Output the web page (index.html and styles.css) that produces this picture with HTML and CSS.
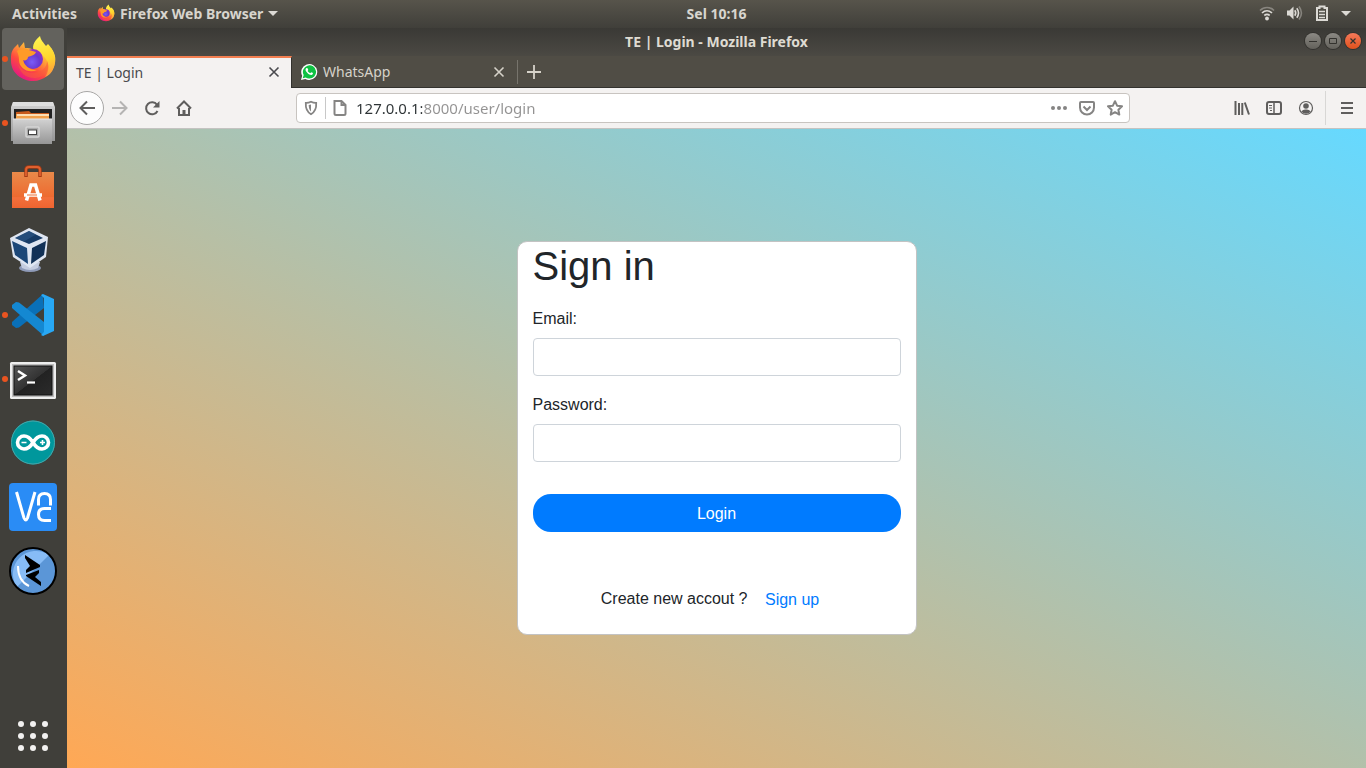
FILE: index.html
```html
<!DOCTYPE html>
<html lang="id">
<head>
<meta charset="utf-8">
<meta name="viewport" content="width=device-width, initial-scale=1">
<title>TE | Login</title>
<link rel="stylesheet" href="styles.css">
</head>
<body>
<svg class="defs" width="0" height="0" aria-hidden="true">
  <defs>
    <linearGradient id="foxBody" x1="0.85" y1="0.1" x2="0.2" y2="0.95"><stop offset="0" stop-color="#fff44f"/><stop offset=".35" stop-color="#ffa436"/><stop offset=".65" stop-color="#ff4a3f"/><stop offset="1" stop-color="#e31587"/></linearGradient>
    <linearGradient id="foxFlame" x1="0.4" y1="0" x2="0.6" y2="1"><stop offset="0" stop-color="#fff44f"/><stop offset=".6" stop-color="#ffd32c"/><stop offset="1" stop-color="#ff9640"/></linearGradient>
    <radialGradient id="foxGlobe" cx=".45" cy=".65" r=".65"><stop offset="0" stop-color="#7a5cf5"/><stop offset=".6" stop-color="#6a38cf"/><stop offset="1" stop-color="#9a2fc0"/></radialGradient>
    <linearGradient id="metal" x1="0" y1="0" x2="0" y2="1"><stop offset="0" stop-color="#d2d2d2"/><stop offset="1" stop-color="#969696"/></linearGradient>
    <linearGradient id="bag" x1="0" y1="0" x2="0" y2="1"><stop offset="0" stop-color="#e98a4a"/><stop offset=".7" stop-color="#ee6a30"/><stop offset=".71" stop-color="#f4703c"/><stop offset="1" stop-color="#ef6430"/></linearGradient>
    <linearGradient id="screen" x1="0" y1="0" x2="1" y2="1"><stop offset="0" stop-color="#555"/><stop offset=".5" stop-color="#333"/><stop offset=".51" stop-color="#222"/><stop offset="1" stop-color="#2b2b2b"/></linearGradient>
    <symbol id="firefox" viewBox="0 0 48 48">
      <path fill="url(#foxBody)" d="M5 13 9 9l1 4 5-6 1 6c3 0 6 0 8 2 3-3 9-5 14-1l4-1c4 5 5 10 4 15-2 10-11 18-22 18S2 38 2 26c0-6 0-9 3-13z"/>
      <path fill="url(#foxFlame)" d="M31 1c1 5 4 7 6 10l2-2c5 5 7 11 7 17 0 7-4 14-10 16 3-4 5-10 2-16-2-5-6-6-11-8-6-5-2-12 4-17z"/>
      <circle cx="24" cy="24" r="10" fill="url(#foxGlobe)"/>
      <path fill="#ff9a28" d="M8 16c5-4 9-3 12-1l7 2c-1 3-5 4-8 5 0 3-3 4-5 3 1 5 6 10 14 10-9 4-18-2-18-10 0-4-1-6-2-9z"/>
      <path fill="#fa5b3d" d="M9 29c4 7 12 11 20 8 6-2 9-6 9-11 4 8-2 17-13 17-8 0-14-5-16-14z" opacity=".55"/>
    </symbol>
    <symbol id="close" viewBox="0 0 12 12"><path d="M1.500 1.500l9 9m0-9l-9 9" fill="none" stroke="currentColor" stroke-width="1.600"/></symbol>
  </defs>
</svg>

<header class="topbar">
  <div class="topbar-left">
    <button class="plain" type="button">Activities</button>
    <button class="plain app-menu" type="button"><svg width="18" height="18" aria-hidden="true"><use href="#firefox"/></svg>Firefox Web Browser<span class="caret"></span></button>
  </div>
  <button class="plain clock" type="button">Sel 10:16</button>
  <button class="plain tray" type="button" aria-label="System menu">
    <svg width="16" height="16" viewBox="0 0 16 16" fill="none" stroke="#dcdad5" stroke-width="1.700"><path d="M1 5.500c4-4 10-4 14 0" opacity=".4"/><path d="M3 8c3-2.800 7-2.800 10 0M5.300 10.500c1.700-1.400 3.700-1.400 5.400 0"/><circle cx="8" cy="13.500" r="1.900" fill="#dcdad5" stroke="none"/></svg>
    <svg width="16" height="16" viewBox="0 0 16 16" fill="none" stroke="#dcdad5" stroke-width="1.600"><path d="M0 5.500h2.500l4-4v13l-4-4H0z" fill="#dcdad5" stroke="none"/><path d="M7.800 5.200c1.200 1.800 1.200 3.800 0 5.600M9.800 3.300c2.200 3 2.200 6.400 0 9.400"/><path d="M12 1.500c3 4 3 9 0 13" opacity=".4"/></svg>
    <svg width="14" height="18" viewBox="0 0 14 18" fill="none" stroke="#dcdad5" stroke-width="2"><path d="M2 4h2.500V2.500h5V4H12v12H2z"/><path d="M4 7.500h6M4 10.500h6M4 13.500h6" stroke-width="1.400"/></svg>
    <span class="caret"></span>
  </button>
</header>

<div class="desktop">
  <nav class="dock" aria-label="Dock">
    <button class="dock-item running active" type="button" aria-label="Firefox"><svg width="48" height="48"><use href="#firefox"/></svg></button>
    <button class="dock-item running" type="button" aria-label="Files"><svg width="48" height="48" viewBox="0 0 48 48"><path d="M4 3h40l2 5v34H2V8z" fill="url(#metal)"/><path d="M4 3h40l1 4H3z" fill="#dedede"/><rect x="5" y="10" width="38" height="12" fill="#222"/><path d="M7 13l13-1 2 2h18v8H7z" fill="#c85a1c"/><path d="M7 15h33v6H7z" fill="#f2a04a"/><path d="M8 16h32" stroke="#fff3d8" stroke-width="1.500"/><rect x="4" y="20" width="39" height="25" fill="url(#metal)"/><path d="M4 20h39" stroke="#e8e8e8"/><rect x="17" y="28" width="13" height="10" rx="1" fill="#aaa" stroke="#d5d5d5" stroke-width="1.500"/><rect x="19.500" y="31" width="8" height="4.500" fill="#fff" stroke="#444"/></svg></button>
    <button class="dock-item" type="button" aria-label="Ubuntu Software"><svg width="48" height="48" viewBox="0 0 48 48"><rect x="3" y="9" width="42" height="36" fill="url(#bag)"/><path d="M17 14V7q0-3 3-3h8q3 0 3 3v7" fill="none" stroke="#a53b14" stroke-width="3.500"/><path d="M17 13V7q0-3 3-3h8q3 0 3 3v6" fill="none" stroke="#e0602e" stroke-width="1.800"/><path d="M17.500 37.500 22 22h4.500L31 37.500" fill="none" stroke="#fff" stroke-width="3.500"/><path d="M15 32h18" stroke="#fff" stroke-width="3.500"/><path d="M18 32h10" stroke="#ed6c32"/></svg></button>
    <button class="dock-item" type="button" aria-label="VirtualBox"><svg width="48" height="48" viewBox="0 0 48 48"><ellipse cx="21" cy="41" rx="11" ry="4" fill="#8f9bb8"/><path d="M11 35h20l-2 6q-8 4-16 0z" fill="#c5cde0"/><path d="M20 1l19 9-2 20-16 11L4 30 1 11z" fill="#dfe6f2"/><path d="M20 4l14 7-14 6-14-6z" fill="#173b66"/><path d="M3 14l15 7 1 16L6 28z" fill="#1c4778"/><path d="M37 14l-14 7-1 16 13-9z" fill="#123157"/><path d="M20 4l7 3.500-12 7L6 11z" fill="#33608f" opacity=".5"/></svg></button>
    <button class="dock-item running" type="button" aria-label="Visual Studio Code"><svg width="48" height="48" viewBox="0 0 48 48"><path d="M34 3 3 31v3l4 3 3-.5L35 17z" fill="#0a70b8"/><path d="M35 45 3 17v-3l4-3 3 .5L35 31z" fill="#1488d2"/><path d="M34 3l11 5v32l-11 5-2-1 3-3V7l-3-3z" fill="#28a8f4"/></svg></button>
    <button class="dock-item running" type="button" aria-label="Terminal"><svg width="48" height="48" viewBox="0 0 48 48"><rect x="1" y="7" width="46" height="37" rx="1.500" fill="#eee"/><rect x="3" y="9" width="42" height="33" fill="#bcbcbc"/><rect x="5" y="11" width="38" height="29" fill="url(#screen)" stroke="#111"/><path d="M9 16l7 4.500L9 25" fill="none" stroke="#fff" stroke-width="2.500"/><path d="M18 27.500h8" stroke="#fff" stroke-width="2.200"/></svg></button>
    <button class="dock-item" type="button" aria-label="Arduino IDE"><svg width="48" height="48" viewBox="0 0 48 48"><circle cx="24" cy="23.500" r="22" fill="#00979c"/><circle cx="24" cy="23.500" r="21.500" fill="none" stroke="#4aa5a8"/><path d="M24 23.500c-3-5-6-6.500-9-6.500a6.500 6.500 0 000 13c3 0 6-1.500 9-6.500s6-6.500 9-6.500a6.500 6.500 0 010 13c-3 0-6-1.500-9-6.500z" fill="none" stroke="#fff" stroke-width="3.600"/><path d="M12.500 23.500h5M31 23.500h5m-2.500-2.500v5" stroke="#fff" stroke-width="1.600"/></svg></button>
    <button class="dock-item" type="button" aria-label="VNC Viewer"><svg width="48" height="48" viewBox="0 0 48 48"><rect width="48" height="48" rx="4" fill="#2a8cf5"/><g fill="none" stroke="#fff" stroke-width="3"><path d="M7.500 9 15 35q1.800 4 3.500 0L26 9"/><path d="M29.500 22.500v-6q0-6 6-6t6 6v6M42 25.500h-6.500q-6 0-6 6t6 6H42"/></g></svg></button>
    <button class="dock-item" type="button" aria-label="Editor"><svg width="48" height="48" viewBox="0 0 48 48"><circle cx="24" cy="24" r="23" fill="#5b96d7"/><path d="M40 8A23 23 0 008 40z" fill="#87bcf6"/><circle cx="24" cy="24" r="23" fill="none" stroke="#000" stroke-width="2"/><path d="M16 8l15 10v2l-14 6v-3l4-4-5-8z" fill="#000"/><path d="M30 23v3l-4 4 6 5v4L17 29v-1z" fill="#000"/><path d="M9 19q0 15 11 20" fill="none" stroke="#fff" stroke-width="2"/></svg></button>
    <button class="dock-item show-apps" type="button" aria-label="Show Applications"><svg width="32" height="32" viewBox="0 0 32 32" fill="#f2f1f0"><circle cx="4" cy="4" r="3"/><circle cx="16" cy="4" r="3"/><circle cx="28" cy="4" r="3"/><circle cx="4" cy="16" r="3"/><circle cx="16" cy="16" r="3"/><circle cx="28" cy="16" r="3"/><circle cx="4" cy="28" r="3"/><circle cx="16" cy="28" r="3"/><circle cx="28" cy="28" r="3"/></svg></button>
  </nav>

  <section class="window">
    <div class="titlebar">
      <span></span>
      <span class="window-title">TE | Login - Mozilla Firefox</span>
      <div class="window-buttons">
        <button type="button" aria-label="Minimize"><svg width="10" height="10"><path d="M1 5.500h8" stroke="#33322e"/></svg></button>
        <button type="button" aria-label="Maximize"><svg width="10" height="10"><path d="M1.500 2.500h7v5h-7z" fill="none" stroke="#33322e"/></svg></button>
        <button class="window-close" type="button" aria-label="Close"><svg width="10" height="10"><path d="M2.500 2.500l5 5m0-5l-5 5" stroke="#33322e" stroke-width="1.200"/></svg></button>
      </div>
    </div>

    <div class="tabs">
      <div class="tab selected"><span class="tab-label">TE | Login</span><button class="plain tab-close" type="button" aria-label="Close tab"><svg width="12" height="12"><use href="#close"/></svg></button></div>
      <div class="tab"><svg width="18" height="18" viewBox="0 0 18 18" aria-hidden="true"><path d="M1 17l1.200-4.200A8 8 0 119 17c-1.300 0-2.500-.3-3.700-.9z" fill="#fff"/><path d="M2.700 15.300l1-3.200A6.600 6.600 0 119 15.500c-1.200 0-2.300-.3-3.300-.9z" fill="#0fc143"/><path d="M6.500 5.100c-1.900 1.500-.6 3.500 1.200 5.100 1.500 1.400 3.900 2.600 5.100.8.300-.6.200-1-.2-1.200l-1.300-.6-1.100 1c-1.200-.5-2-1.300-2.600-2.300l.7-1-.7-1.600z" fill="#fff"/></svg><span class="tab-label">WhatsApp</span><button class="plain tab-close" type="button" aria-label="Close tab"><svg width="12" height="12"><use href="#close"/></svg></button></div>
      <button class="plain new-tab" type="button" aria-label="New tab"><svg width="14" height="14"><path d="M7 0v14M0 7h14" stroke="currentColor" stroke-width="1.800"/></svg></button>
    </div>

    <div class="toolbar">
      <button class="tool back" type="button" aria-label="Back"><svg width="16" height="16" viewBox="0 0 16 16"><path d="M16 8H1.500m6.500-6.500L1.500 8 8 14.500"/></svg></button>
      <button class="tool forward" type="button" aria-label="Forward"><svg width="16" height="16" viewBox="0 0 16 16"><path d="M0 8h14.500M8 1.500L14.500 8 8 14.500"/></svg></button>
      <button class="tool" type="button" aria-label="Reload"><svg width="16" height="16" viewBox="0 0 16 16"><path d="M13 4.800A6 6 0 1013.500 11"/><path d="M15.500 1v6.500H9z" fill="currentColor" stroke="none"/></svg></button>
      <button class="tool" type="button" aria-label="Home"><svg width="16" height="16" viewBox="0 0 16 16"><path d="M1 8.500L8 1.500l7 7M3 8v7h10V8"/><path d="M8 15v-5" stroke-width="3"/></svg></button>
      <form class="urlbar">
        <svg width="14" height="16" viewBox="0 0 14 16"><path d="M7 1.800q2.500 1.200 5.200 1.100c.3 5-1 9-5.200 11.300C2.800 11.900 1.500 7.900 1.800 2.900 3.500 3 5.500 2.500 7 1.800z" stroke-width="1.800"/><path d="M7 4.500v7C5.300 10 4.800 8 4.700 5z" fill="currentColor" stroke="none"/></svg>
        <span class="url-divider"></span>
        <svg width="14" height="16" viewBox="0 0 14 16"><path d="M1.500 1h7l4 4v8.500q0 1.500-1.500 1.500H3q-1.500 0-1.500-1.500z"/><path d="M8.500 1v4h4"/></svg>
        <input class="url" type="text" aria-label="Address" value="127.0.0.1:8000/user/login">
        <button class="url-action" type="button" aria-label="Page actions"><svg width="16" height="16" viewBox="0 0 16 16"><g fill="currentColor" stroke="none"><circle cx="2" cy="8" r="2"/><circle cx="8" cy="8" r="2"/><circle cx="14" cy="8" r="2"/></g></svg></button>
        <button class="url-action" type="button" aria-label="Save to Pocket"><svg width="16" height="16" viewBox="0 0 16 16"><path d="M2 2h12q1 0 1 1v4.500a7 7 0 01-14 0V3q0-1 1-1z"/><path d="M4.500 6.500L8 10l3.500-3.500"/></svg></button>
        <button class="url-action" type="button" aria-label="Bookmark"><svg width="16" height="16" viewBox="0 0 16 16"><path d="M8 1.200l2.100 4.500 4.900.6-3.600 3.400.9 4.900L8 12.200l-4.300 2.400.9-4.900L1 6.300l4.900-.6z" stroke-linejoin="round"/></svg></button>
      </form>
      <button class="tool" type="button" aria-label="Library"><svg width="16" height="16" viewBox="0 0 16 16"><path d="M1.500 1v14M5 3v12M8.300 3v12M10.800 2.500L15 14.500"/></svg></button>
      <button class="tool" type="button" aria-label="Sidebars"><svg width="16" height="16" viewBox="0 0 16 16"><rect x="1" y="2" width="14" height="12" rx="2"/><path d="M8 2v12" stroke-width="1.500"/><path d="M3 5.500h3M3 8h3M4 10.500h2" stroke-width="1"/></svg></button>
      <button class="tool" type="button" aria-label="Account"><svg width="16" height="16" viewBox="0 0 16 16"><circle cx="8" cy="8" r="6.500" stroke-width="1.200"/><circle cx="8" cy="6" r="2.800" fill="currentColor" stroke="none"/><path d="M3.300 11.500q2-2.500 4.700-2 2.700-.5 4.700 2Q10.800 13.700 8 13.700t-4.700-2.200z" fill="currentColor" stroke="none"/></svg></button>
      <span class="tool-divider"></span>
      <button class="tool" type="button" aria-label="Menu"><svg width="16" height="16" viewBox="0 0 16 16"><path d="M2 3h12M2 8h12M2 13h12"/></svg></button>
    </div>

    <main class="page">
      <form class="card">
        <h1>Sign in</h1>
        <div class="form-group"><label for="email">Email:</label><input class="form-control" id="email" type="email"></div>
        <div class="form-group"><label for="password">Password:</label><input class="form-control" id="password" type="password"></div>
        <button class="btn-login" type="submit">Login</button>
        <p class="signup">Create new accout ? <a class="btn-link" href="#">Sign up</a></p>
      </form>
    </main>
  </section>
</div>
</body>
</html>
```
FILE: styles.css
```css
*, *::before, *::after { box-sizing: border-box; }

body {
  margin: 0;
  min-height: 100vh;
  display: flex;
  flex-direction: column;
  font-family: "Noto Sans", "Open Sans", sans-serif;
  font-size: 14px;
  background: #403f3a;
}

button, input { font: inherit; margin: 0; }
svg { display: block; flex: none; }
.defs { position: absolute; }

.plain { padding: 0; border: 0; background: none; color: inherit; }

.caret {
  border: 5px solid transparent;
  border-top-color: #dcdad5;
  border-bottom: 0;
}

/* Desktop top bar */
.topbar {
  display: grid;
  grid-template-columns: 70px 1fr auto 1fr;
  align-items: center;
  height: 28px;
  padding: 0 15px 2px 12px;
  background: linear-gradient(#57544b, #403f3a);
  color: #d8d5ce;
  font-weight: 700;
}
.topbar-left { grid-column: 1 / 3; display: flex; gap: 20px; }
.app-menu { display: flex; align-items: center; gap: 5px; }
.tray { display: flex; align-items: center; gap: 12px; justify-self: end; }

.desktop { flex: 1; display: flex; }

/* Dock */
.dock {
  width: 67px;
  display: flex;
  flex-direction: column;
  gap: 2px;
  padding: 0 3px 1px 2px;
}
.dock-item {
  position: relative;
  display: grid;
  place-items: center;
  height: 62px;
  padding: 0;
  border: 0;
  border-radius: 4px;
  background: none;
}
.dock-item.active { background: #63625d; }
.dock-item.running::before {
  content: "";
  position: absolute;
  left: 0;
  top: 28px;
  width: 6px;
  height: 6px;
  border-radius: 50%;
  background: #e95420;
}
.show-apps { margin-top: auto; }

/* Browser window */
.window { flex: 1; min-width: 0; display: flex; flex-direction: column; }

.titlebar {
  display: grid;
  grid-template-columns: 1fr auto 1fr;
  align-items: center;
  height: 28px;
  padding: 0 5px 2px 5px;
  background: linear-gradient(#3a3935, #4b4943);
  color: #dfdbd2;
  font-weight: 700;
}
.window-buttons { display: flex; gap: 4px; justify-self: end; }
.window-buttons button {
  display: grid;
  place-items: center;
  width: 16px;
  height: 16px;
  padding: 0;
  border: 0;
  border-radius: 50%;
  background: linear-gradient(#8b8984, #63615b);
  box-shadow: 0 0 0 1px #33322e;
}
.window-buttons .window-close { background: linear-gradient(#f5795a, #e1511c); }

.tabs {
  display: flex;
  height: 32px;
  background: #504d45;
  border-bottom: 1px solid #33322e;
  color: #d6d2c9;
}
.tab {
  display: flex;
  align-items: center;
  gap: 5px;
  width: 225px;
  padding: 0 12px 0 8px;
}
.tab-label { flex: 1; }
.tab.selected {
  height: 32px;
  padding: 0 11px 2px 9px;
  border-top: 2px solid #f37f51;
  border-right: 1px solid #33322e;
  background: #f4f2f1;
  color: #4a4a4e;
}
.new-tab {
  width: 33px;
  height: 24px;
  margin-top: 4px;
  display: grid;
  place-items: center;
  border-left: 1px solid #77746c;
}

.toolbar {
  display: flex;
  align-items: center;
  height: 41px;
  padding: 0 3px;
  border-bottom: 1px solid #c4c3c1;
  background: #f4f2f1;
  color: #5f5e5d;
}
.toolbar svg { fill: none; stroke: currentColor; stroke-width: 2; }
.tool {
  display: grid;
  place-items: center;
  width: 32px;
  height: 32px;
  padding: 0;
  border: 0;
  background: none;
  color: inherit;
}
.tool.back {
  width: 34px;
  height: 34px;
  border: 1px solid #a8a7a6;
  border-radius: 50%;
  background: #fdfdfd;
}
.tool.forward { color: #b5b4b3; }
.tool-divider { width: 1px; height: 34px; margin: 0 5px 0 3px; background: #d8d7d5; }

.urlbar {
  flex: 1;
  display: flex;
  align-items: center;
  gap: 7px;
  height: 30px;
  margin: 0 96px;
  padding: 0 4px 0 7px;
  border: 1px solid #c8c4c0;
  border-radius: 4px;
  background: #fff;
  color: #858483;
}
.url-divider { width: 1px; height: 22px; background: #c8c8c8; }
.url {
  flex: 1;
  min-width: 0;
  padding: 0 0 0 2px;
  border: 0;
  outline: 0;
  font-size: 15px;
  background: linear-gradient(90deg, #2e3436 68px, #939292 68px);
  background-clip: text;
  -webkit-background-clip: text;
  color: transparent;
}
.url-action {
  display: grid;
  place-items: center;
  width: 21px;
  padding: 0;
  border: 0;
  background: none;
  color: inherit;
}

/* Login page */
.page {
  flex: 1;
  padding: 112px 16px 16px;
  background: linear-gradient(to right top, #ffa855, #66d9ff);
  font: 16px/24px "Liberation Sans", Arial, sans-serif;
  color: #212529;
}
.card {
  max-width: 400px;
  margin: 0 auto;
  padding: 0 15px 15px;
  border: 1px solid #c3c3c3;
  border-radius: 10px;
  background: #fff;
}
.card h1 {
  margin: 0 0 17px;
  font-size: 40px;
  line-height: 48px;
  font-weight: 400;
}
.form-group { margin-bottom: 17px; }
.form-group label { display: block; margin-bottom: 7px; }
.form-control {
  display: block;
  width: 100%;
  height: 38px;
  padding: 6px 12px;
  border: 1px solid #ced4da;
  border-radius: 4px;
  background: #fff;
}
.btn-login {
  width: 100%;
  height: 38px;
  margin-top: 15px;
  padding: 1px 0 0;
  border: 0;
  border-radius: 18px;
  background: #007bff;
  color: #fff;
}
.signup { margin: 49px 0 0; text-align: center; }
.btn-link {
  display: inline-block;
  padding: 6px 12px;
  border: 1px solid transparent;
  vertical-align: middle;
  color: #007bff;
  text-decoration: none;
}
```
